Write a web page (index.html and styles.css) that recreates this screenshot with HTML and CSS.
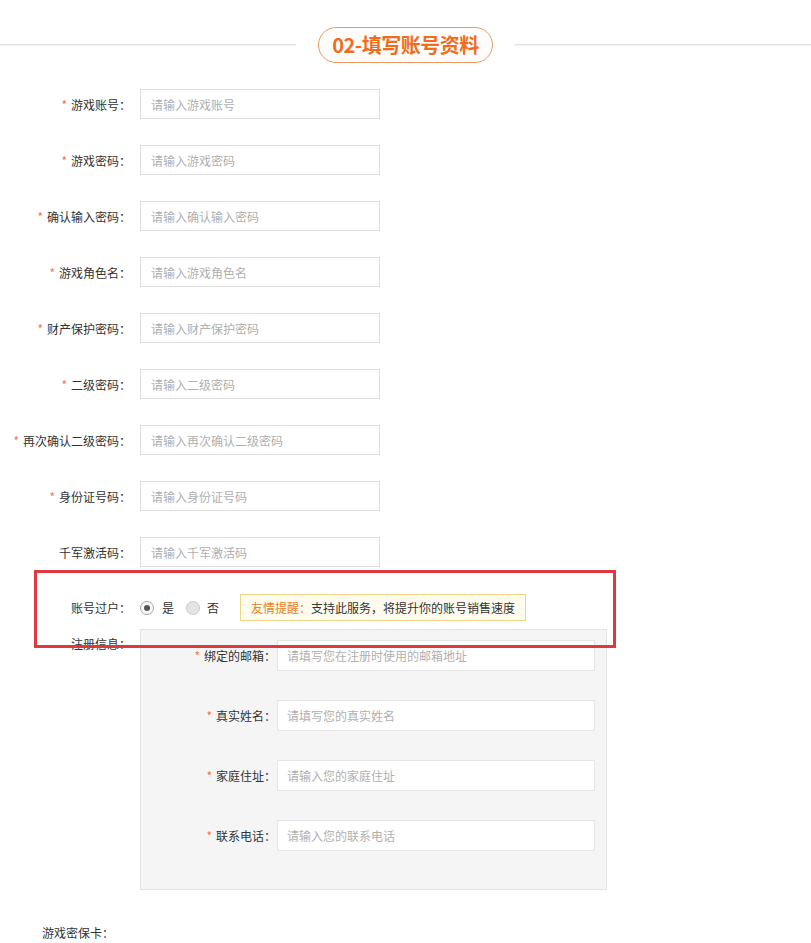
FILE: index.html
```html
<!DOCTYPE html>
<html lang="zh-CN">
<head>
  <meta charset="UTF-8" />
  <meta name="viewport" content="width=device-width, initial-scale=1.0" />
  <title>填写账号资料</title>
  <link rel="stylesheet" href="styles.css">
</head>
<body>
  <div class="page">
    <div class="step-title">
      <span class="line"></span>
      <h2 class="pill">02-填写账号资料</h2>
      <span class="line"></span>
    </div>

    <form class="account-form">
      <div class="row">
        <label class="label"><i class="req">*</i>游戏账号：</label>
        <input class="field" type="text" placeholder="请输入游戏账号" />
      </div>
      <div class="row">
        <label class="label"><i class="req">*</i>游戏密码：</label>
        <input class="field" type="text" placeholder="请输入游戏密码" />
      </div>
      <div class="row">
        <label class="label"><i class="req">*</i>确认输入密码：</label>
        <input class="field" type="text" placeholder="请输入确认输入密码" />
      </div>
      <div class="row">
        <label class="label"><i class="req">*</i>游戏角色名：</label>
        <input class="field" type="text" placeholder="请输入游戏角色名" />
      </div>
      <div class="row">
        <label class="label"><i class="req">*</i>财产保护密码：</label>
        <input class="field" type="text" placeholder="请输入财产保护密码" />
      </div>
      <div class="row">
        <label class="label"><i class="req">*</i>二级密码：</label>
        <input class="field" type="text" placeholder="请输入二级密码" />
      </div>
      <div class="row">
        <label class="label"><i class="req">*</i>再次确认二级密码：</label>
        <input class="field" type="text" placeholder="请输入再次确认二级密码" />
      </div>
      <div class="row">
        <label class="label"><i class="req">*</i>身份证号码：</label>
        <input class="field" type="text" placeholder="请输入身份证号码" />
      </div>
      <div class="row">
        <label class="label">千军激活码：</label>
        <input class="field" type="text" placeholder="请输入千军激活码" />
      </div>

      <div class="row transfer">
        <span class="label">账号过户：</span>
        <span class="radio checked"></span><span class="radio-text yes">是</span>
        <span class="radio"></span><span class="radio-text no">否</span>
        <span class="tip"><b>友情提醒：</b>支持此服务，将提升你的账号销售速度</span>
      </div>

      <div class="reg">
        <span class="label">注册信息：</span>
        <div class="reg-panel">
          <div class="sub-row">
            <label class="sub-label"><i class="req">*</i>绑定的邮箱：</label>
            <input class="sub-field" type="text" placeholder="请填写您在注册时使用的邮箱地址" />
          </div>
          <div class="sub-row">
            <label class="sub-label"><i class="req">*</i>真实姓名：</label>
            <input class="sub-field" type="text" placeholder="请填写您的真实姓名" />
          </div>
          <div class="sub-row">
            <label class="sub-label"><i class="req">*</i>家庭住址：</label>
            <input class="sub-field" type="text" placeholder="请输入您的家庭住址" />
          </div>
          <div class="sub-row">
            <label class="sub-label"><i class="req">*</i>联系电话：</label>
            <input class="sub-field" type="text" placeholder="请输入您的联系电话" />
          </div>
        </div>
      </div>

      <div class="card-row">游戏密保卡：</div>
    </form>

    <!-- highlight frame around the transfer option -->
    <div class="mark"></div>
  </div>
</body>
</html>
```

FILE: styles.css
```css
body {
  margin: 0;
  font-family: "Noto Sans CJK SC", "Liberation Sans", sans-serif;
  font-size: 12px;
  color: #333;
  background: #fff;
}
.page {
  position: relative;
  width: 811px;
}

/* section heading */
.step-title {
  height: 89px;
  display: flex;
  align-items: center;
  gap: 22px;
}
.line {
  flex: 1;
  height: 1px;
  background: #e2e2e2;
  box-shadow: 0 1px 0 #f2f2f2;
}
.pill {
  margin: 0;
  width: 175px;
  height: 36px;
  box-sizing: border-box;
  border: 1px solid #e99a62;
  border-radius: 18px;
  background: #fffdfb;
  color: #ef6d1d;
  font-size: 20px;
  font-weight: bold;
  line-height: 34px;
  text-align: center;
  letter-spacing: -0.5px;
}

/* main rows */
.row {
  display: flex;
  align-items: center;
  height: 30px;
  margin-bottom: 26px;
}
.label {
  width: 131px;
  flex-shrink: 0;
  padding-right: 9px;
  text-align: right;
  white-space: nowrap;
  color: #333;
}
.req {
  font-style: normal;
  color: #f5793a;
  margin-right: 4px;
}
.field {
  width: 240px;
  height: 30px;
  box-sizing: border-box;
  border: 1px solid #dcdcdc;
  padding: 0 10px;
  font-family: inherit;
  font-size: 12px;
  outline: none;
}
.field::placeholder,
.sub-field::placeholder {
  color: #b0b0b0;
}

/* transfer option */
.transfer {
  height: 29px;
  margin-bottom: 7px;
}
.radio {
  width: 14px;
  height: 14px;
  flex-shrink: 0;
  border-radius: 50%;
  border: 1px solid #c8c8c8;
  background: #e4e4e4;
  box-sizing: border-box;
  position: relative;
}
.radio.checked {
  background: #f8f8f8;
  border-color: #a8a8a8;
}
.radio.checked::after {
  content: "";
  position: absolute;
  left: 3px;
  top: 3px;
  width: 6px;
  height: 6px;
  border-radius: 50%;
  background: #555;
}
.radio-text {
  margin-left: 8px;
}
.radio-text.yes {
  margin-right: 12px;
}
.radio-text.no {
  margin-left: 7px;
  margin-right: 21px;
}
.tip {
  height: 27px;
  box-sizing: border-box;
  padding: 0 10px;
  border: 1px solid #f1d38a;
  background: #fffcee;
  line-height: 25px;
  color: #333;
}
.tip b {
  font-weight: normal;
  color: #e8801e;
}

/* registration panel */
.reg {
  display: flex;
  align-items: flex-start;
}
.reg .label {
  line-height: 30px;
}
.reg-panel {
  width: 467px;
  height: 261px;
  box-sizing: border-box;
  border: 1px solid #e3e3e3;
  background: #f5f5f5;
  padding-top: 10px;
}
.sub-row {
  display: flex;
  align-items: center;
  height: 30px;
  margin-bottom: 30px;
}
.sub-label {
  width: 135px;
  padding-right: 1px;
  text-align: right;
  white-space: nowrap;
}
.sub-field {
  width: 318px;
  height: 31px;
  box-sizing: border-box;
  border: 1px solid #e6e6e6;
  background: #fff;
  padding: 0 9px;
  font-family: inherit;
  font-size: 12px;
  outline: none;
}

.card-row {
  margin-top: 33px;
  padding-left: 42px;
  line-height: 20px;
}

.mark {
  position: absolute;
  left: 34px;
  top: 570px;
  width: 582px;
  height: 78px;
  box-sizing: border-box;
  border: 3px solid #dc3a3f;
  pointer-events: none;
}
```
